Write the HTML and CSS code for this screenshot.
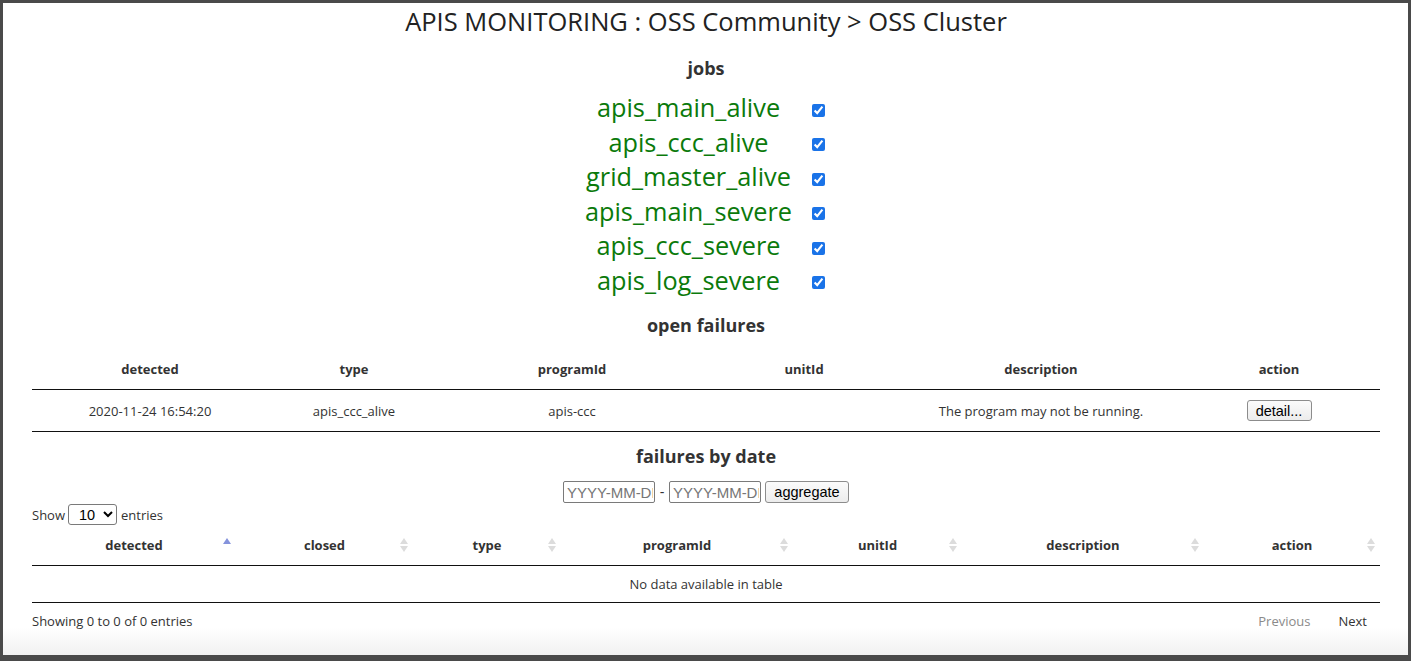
FILE: index.html
```html
<!DOCTYPE html>
<html lang="en">
<head>
<meta charset="utf-8">
<title>APIS MONITORING</title>
<link rel="stylesheet" href="styles.css">
</head>
<body>
<div class="window">
  <h1 class="title">APIS MONITORING : OSS Community &gt; OSS Cluster</h1>

  <h3 class="section section-jobs">jobs</h3>
  <div class="jobs">
    <span class="job">apis_main_alive</span><input class="cb" type="checkbox" checked>
    <span class="job">apis_ccc_alive</span><input class="cb" type="checkbox" checked>
    <span class="job">grid_master_alive</span><input class="cb" type="checkbox" checked>
    <span class="job">apis_main_severe</span><input class="cb" type="checkbox" checked>
    <span class="job">apis_ccc_severe</span><input class="cb" type="checkbox" checked>
    <span class="job">apis_log_severe</span><input class="cb" type="checkbox" checked>
  </div>

  <h3 class="section section-open">open failures</h3>
  <table class="dt open-table">
    <thead>
      <tr>
        <th class="o1">detected</th>
        <th class="o2">type</th>
        <th class="o3">programId</th>
        <th class="o4">unitId</th>
        <th class="o5">description</th>
        <th class="o6">action</th>
      </tr>
    </thead>
    <tbody>
      <tr>
        <td>2020-11-24 16:54:20</td>
        <td>apis_ccc_alive</td>
        <td>apis-ccc</td>
        <td></td>
        <td>The program may not be running.</td>
        <td><button class="btn btn-detail" type="button">detail...</button></td>
      </tr>
    </tbody>
  </table>

  <h3 class="section section-date">failures by date</h3>
  <div class="range">
    <input class="date" type="text" placeholder="YYYY-MM-DD">
    <span class="dash">-</span>
    <input class="date" type="text" placeholder="YYYY-MM-DD">
    <button class="btn btn-agg" type="button">aggregate</button>
  </div>

  <div class="length">
    <span>Show</span>
    <select class="len-select">
      <option>10</option>
      <option>25</option>
      <option>50</option>
      <option>100</option>
    </select>
    <span>entries</span>
  </div>

  <table class="dt hist-table">
    <thead>
      <tr>
        <th class="h1c sorting sorting-asc">detected</th>
        <th class="h2c sorting">closed</th>
        <th class="h3c sorting">type</th>
        <th class="h4c sorting">programId</th>
        <th class="h5c sorting">unitId</th>
        <th class="h6c sorting">description</th>
        <th class="h7c sorting">action</th>
      </tr>
    </thead>
    <tbody>
      <tr>
        <td class="empty" colspan="7">No data available in table</td>
      </tr>
    </tbody>
  </table>

  <div class="footer">
    <div class="info">Showing 0 to 0 of 0 entries</div>
    <div class="paginate">
      <a class="pg pg-disabled">Previous</a>
      <a class="pg">Next</a>
    </div>
  </div>
</div>
</body>
</html>
```

FILE: styles.css
```css
html, body {
  margin: 0;
  padding: 0;
}

body {
  background: #4a4a4a;
  padding: 3px 3px 6px 3px;
  font-family: "Open Sans", "DejaVu Sans", sans-serif;
  color: #333;
}

.window {
  height: 652px;
  overflow: hidden;
  background: linear-gradient(to bottom, #ffffff 0, #ffffff 624px, #f1f1f1 652px);
  padding: 0 28px 0 29px;
  box-sizing: border-box;
}

.title {
  margin: 1px 0 0 0;
  font-size: 25.5px;
  line-height: 34px;
  font-weight: normal;
  text-align: center;
  color: #222;
}

.section {
  margin: 0;
  font-size: 18px;
  line-height: 24px;
  font-weight: bold;
  text-align: center;
  color: #333;
}

.section-jobs { margin-top: 18px; }
.section-open { margin-top: 16px; }
.section-date { margin-top: 12px; }

.jobs {
  display: grid;
  grid-template-columns: 246px 35px;
  grid-auto-rows: 34.5px;
  justify-content: center;
  align-items: center;
  margin-top: 10px;
}

.job {
  text-align: center;
  font-size: 25.3px;
  line-height: 34.5px;
  color: #0b7a0b;
}

.cb {
  width: 13px;
  height: 13px;
  margin: 6px 0 0 0;
  accent-color: #1a73e8;
}

/* tables */
.dt {
  width: 100%;
  border-collapse: separate;
  border-spacing: 0;
  table-layout: fixed;
  border-bottom: 1px solid #111;
  font-size: 13px;
}

.dt th {
  position: relative;
  box-sizing: border-box;
  padding: 10px 18px;
  line-height: 20px;
  font-weight: bold;
  text-align: center;
  border-bottom: 1px solid #111;
  color: #333;
}

.dt td {
  padding: 8px 10px;
  line-height: 20px;
  text-align: center;
  vertical-align: middle;
  color: #333;
}

.open-table { margin-top: 12px; }

.o1 { width: 236px; }
.o2 { width: 172px; }
.o3 { width: 264px; }
.o4 { width: 200px; }
.o5 { width: 274px; }
.o6 { width: 202px; }

.h1c { width: 204px; }
.h2c { width: 177px; }
.h3c { width: 148px; }
.h4c { width: 232px; }
.h5c { width: 169px; }
.h6c { width: 242px; }
.h7c { width: 176px; }

.sorting::before,
.sorting::after {
  content: "";
  position: absolute;
  right: 5px;
  width: 0;
  height: 0;
  border-left: 4px solid transparent;
  border-right: 4px solid transparent;
}

.sorting::before {
  top: calc(50% - 7px);
  border-bottom: 6px solid #dcdcdc;
}

.sorting::after {
  top: calc(50% + 1px);
  border-top: 6px solid #dcdcdc;
}

.sorting-asc::before {
  border-bottom-color: #8593dc;
}

.sorting-asc::after {
  display: none;
}

.btn {
  font-family: "Liberation Sans", Arial, sans-serif;
  font-size: 14.5px;
  color: #000;
  background: linear-gradient(to bottom, #fbfbfb, #ececec);
  border: 1px solid #8c8c8c;
  border-radius: 3px;
  padding: 0;
  height: 21px;
  box-sizing: border-box;
}

.btn-detail {
  width: 65px;
  margin: 2px 0;
}

.btn-agg {
  width: 84px;
  height: 22px;
  margin-left: 4px;
}

/* date range */
.range {
  display: flex;
  justify-content: center;
  align-items: center;
  margin-top: 13px;
  height: 22px;
}

.date {
  width: 92px;
  height: 22px;
  box-sizing: border-box;
  padding: 0 1px 0 3px;
  border: 1px solid #7a7a7a;
  border-radius: 2px;
  font-family: "Liberation Sans", Arial, sans-serif;
  font-size: 15px;
  color: #000;
}

.date::placeholder {
  color: #767676;
}

.dash {
  width: 14px;
  text-align: center;
  font-family: "Liberation Sans", Arial, sans-serif;
  font-size: 14px;
  color: #333;
}

/* length */
.length {
  display: flex;
  align-items: center;
  gap: 3px;
  height: 21px;
  margin-top: 1px;
  font-size: 13px;
  color: #333;
}

.len-select {
  width: 49px;
  height: 21px;
  margin-right: 1px;
  font-family: "Liberation Sans", Arial, sans-serif;
  font-size: 14.5px;
  color: #000;
  border: 1px solid #7a7a7a;
  border-radius: 3px;
  background: #fff;
  padding: 0 0 0 6px;
}

/* footer */
.footer {
  display: flex;
  justify-content: space-between;
  align-items: center;
  margin-top: 8px;
  height: 20px;
  font-size: 13px;
}

.info {
  line-height: 20px;
  color: #333;
}

.paginate {
  display: flex;
}

.pg {
  padding: 0 13px;
  margin-left: 2px;
  line-height: 20px;
  color: #333;
}

.pg-disabled {
  color: #8a8a8a;
}
```
